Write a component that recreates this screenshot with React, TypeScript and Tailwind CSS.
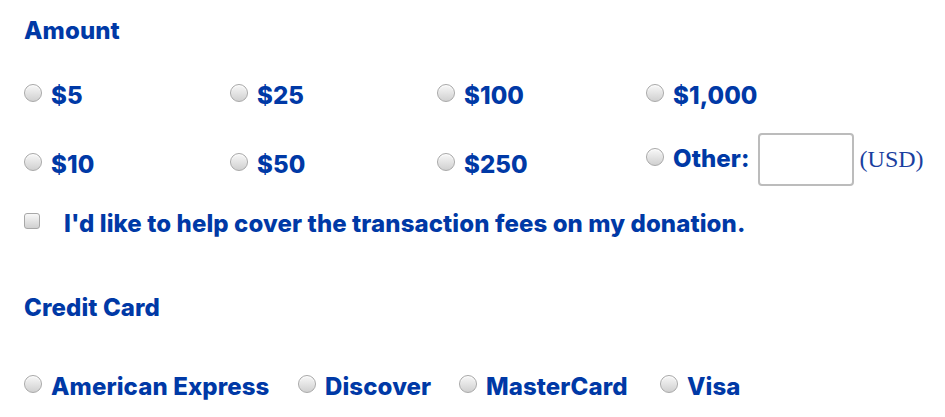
import React from "react";

const font = { fontFamily: "Inter, 'Noto Sans', sans-serif" };

function Radio({ shift = "-translate-y-[3px]" }: { shift?: string }) {
  return (
    <span
      className={
        "inline-block w-[18px] h-[18px] shrink-0 rounded-full border border-[#a8a8a8] bg-linear-to-b from-[#f8f8f8] to-[#d0d0d0] shadow-[inset_0_1px_1px_rgba(255,255,255,0.9)] " +
        shift
      }
    />
  );
}

function Option({ label }: { label: string }) {
  return (
    <div className="flex items-center gap-[9px]">
      <Radio />
      <span>{label}</span>
    </div>
  );
}

export default function App() {
  return (
    <div
      className="w-[945px] h-[417px] bg-white pl-6 pt-[17px] text-[#0039a6] font-extrabold text-[24px] leading-[28px] tracking-[0.1px] overflow-hidden"
      style={font}
    >
      <div>Amount</div>
      <div className="mt-[37px] grid grid-cols-[206px_207px_209px_auto]">
        <Option label="$5" />
        <Option label="$25" />
        <Option label="$100" />
        <Option label="$1,000" />
      </div>
      <div className="mt-[23px] grid grid-cols-[206px_207px_209px_auto] h-[53px]">
        <div className="mt-[18px]"><Option label="$10" /></div>
        <div className="mt-[18px]"><Option label="$50" /></div>
        <div className="mt-[18px]"><Option label="$250" /></div>
        <div className="flex items-center">
          <div className="flex items-center gap-[9px] -translate-y-[1px]">
            <Radio shift="-translate-y-[2px]" />
            <span>Other:</span>
          </div>
          <div className="ml-[8px] w-[96px] h-[53px] shrink-0 rounded-[4px] border-2 border-[#bcbcbc] bg-white" />
          <span
            className="ml-[6px] font-normal text-[24px] tracking-normal text-[#1a3fa0] -translate-y-[1px]"
            style={{ fontFamily: "'Liberation Serif', 'Times New Roman', serif" }}
          >
            (USD)
          </span>
        </div>
      </div>
      <div className="mt-[24px] flex items-center gap-[24px]">
        <span className="inline-block w-[16px] h-[16px] shrink-0 rounded-[3px] border border-[#a8a8a8] bg-linear-to-b from-[#f8f8f8] to-[#d0d0d0] -translate-y-[3px]" />
        <span>I'd like to help cover the transaction fees on my donation.</span>
      </div>
      <div className="mt-[56px]">Credit Card</div>
      <div className="mt-[51px] flex items-center">
        <div className="w-[274px] shrink-0"><Option label="American Express" /></div>
        <div className="w-[161px] shrink-0"><Option label="Discover" /></div>
        <div className="w-[201px] shrink-0"><Option label="MasterCard" /></div>
        <Option label="Visa" />
      </div>
    </div>
  );
}
